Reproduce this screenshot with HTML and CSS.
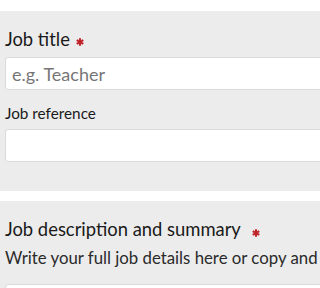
FILE: index.html
```html
<!DOCTYPE html>
<html>
<head>
<meta charset="utf-8">
<link rel="stylesheet" href="styles.css">
</head>
<body>
<div class="page">
  <section class="panel panel-first">
    <label class="label-lg">Job title<svg class="req" viewBox="0 0 10 10" width="8" height="8"><g stroke="#c0252b" stroke-width="2.6" stroke-linecap="butt"><line x1="5" y1="0.3" x2="5" y2="9.7"/><line x1="0.9" y1="2.65" x2="9.1" y2="7.35"/><line x1="0.9" y1="7.35" x2="9.1" y2="2.65"/></g></svg></label>
    <div class="input"><span class="placeholder">e.g. Teacher</span></div>
    <label class="label-sm">Job reference</label>
    <div class="input"></div>
  </section>
  <section class="panel panel-second">
    <h2 class="label-lg">Job description and summary<svg class="req req-far" viewBox="0 0 10 10" width="8" height="8"><g stroke="#c0252b" stroke-width="2.6" stroke-linecap="butt"><line x1="5" y1="0.3" x2="5" y2="9.7"/><line x1="0.9" y1="2.65" x2="9.1" y2="7.35"/><line x1="0.9" y1="7.35" x2="9.1" y2="2.65"/></g></svg></h2>
    <p class="hint">Write your full job details here or copy and</p>
    <div class="input input-tall"></div>
  </section>
</div>
</body>
</html>
```
FILE: styles.css
```css
html, body {
  margin: 0;
  padding: 0;
  background: #ffffff;
  overflow: hidden;
}
.page {
  padding-top: 11px;
  font-family: Lato, "Open Sans", sans-serif;
  color: #1a1a1a;
}
.panel {
  background: #ececec;
  padding: 16px 0 0 5px;
  overflow: hidden;
}
.panel-first {
  padding-bottom: 29px;
  margin-bottom: 10px;
}
.label-lg {
  display: block;
  font-size: 18.4px;
  line-height: 24px;
  font-weight: 400;
  margin: 0 0 6px 0;
  white-space: nowrap;
}
.label-sm {
  display: block;
  font-size: 15.3px;
  line-height: 20px;
  margin: 13px 0 6px 0;
  white-space: nowrap;
}
.req {
  display: inline-block;
  margin-left: 6px;
  vertical-align: 0;
}
.req-far {
  margin-left: 11px;
  vertical-align: -1px;
}
.input {
  width: 400px;
  height: 31px;
  background: #ffffff;
  border: 1px solid #dadada;
  border-radius: 3px;
  box-sizing: content-box;
  display: flex;
  align-items: center;
  padding-left: 6px;
}
.placeholder {
  font-size: 18px;
  color: #767676;
}
.hint {
  margin: 0 0 15px 0;
  font-size: 16.8px;
  line-height: 22px;
  white-space: nowrap;
  color: #2a2a2a;
}
.input-tall {
  height: 120px;
}
```
